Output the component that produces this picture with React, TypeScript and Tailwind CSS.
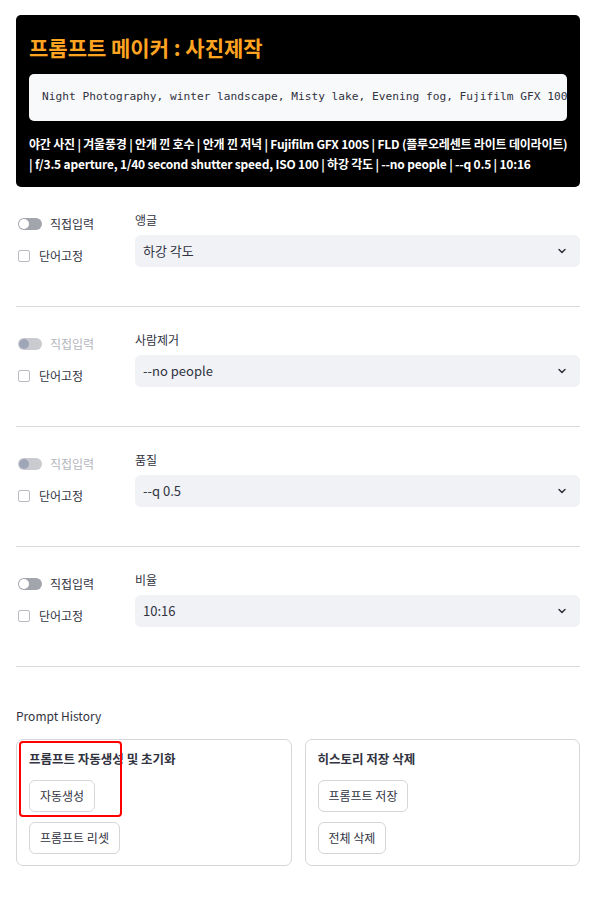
import { ChevronDown } from "lucide-react";

const font = { fontFamily: '"Noto Sans CJK KR", "Noto Sans", sans-serif' };

type Row = { label: string; value: string; disabled?: boolean };

const rows: Row[] = [
  { label: "앵글", value: "하강 각도" },
  { label: "사람제거", value: "--no people", disabled: true },
  { label: "품질", value: "--q 0.5", disabled: true },
  { label: "비율", value: "10:16" },
];

function Toggle({ disabled }: { disabled?: boolean }) {
  return (
    <div className="flex items-center gap-[8px] h-[18px]">
      <div
        className={`ml-[2px] w-[24px] h-[12px] rounded-full flex items-center px-[1px] ${
          disabled ? "bg-[#c9cbd1]" : "bg-[#a3a5ad]"
        }`}
      >
        <div
          className={`w-[10px] h-[10px] rounded-full ${
            disabled ? "bg-[#a0a6ba]" : "bg-white"
          }`}
        />
      </div>
      <span className={`text-[12px] ${disabled ? "text-[#b4b6bd]" : "text-[#31333f]"}`}>
        직접입력
      </span>
    </div>
  );
}

function Checkbox() {
  return (
    <div className="flex items-center gap-[9px] h-[18px]">
      <div className="ml-[2px] w-[12px] h-[12px] rounded-[2px] border border-[#b9bbc2] bg-white" />
      <span className="text-[12px] text-[#31333f]">단어고정</span>
    </div>
  );
}

function SelectRow({ row }: { row: Row }) {
  return (
    <div>
      <div className="flex pt-[24px] pb-[39px]">
        <div className="w-[119px] flex flex-col gap-[14px] pt-[4px]">
          <Toggle disabled={row.disabled} />
          <Checkbox />
        </div>
        <div className="flex-1 flex flex-col gap-[6px]">
          <div className="h-[18px] flex items-center text-[12px] text-[#31333f]">{row.label}</div>
          <div className="h-[32px] rounded-[6px] bg-[#f0f2f6] flex items-center justify-between pl-[8px] pr-[12px]">
            <span className="text-[13px] text-[#31333f]">{row.value}</span>
            <ChevronDown size={12} strokeWidth={3} className="text-[#31333f]" />
          </div>
        </div>
      </div>
      <div className="h-px bg-[#d9dadd]" />
    </div>
  );
}

function Btn({ children }: { children: string }) {
  return (
    <div className="self-start h-[32px] px-[10px] flex items-center rounded-[6px] border border-[#d6d6d9] bg-white text-[12px] text-[#31333f]">
      {children}
    </div>
  );
}

export default function App() {
  return (
    <div className="bg-white w-[608px] min-h-[903px] pl-[16px] pr-[28px] pt-[15px]" style={font}>
      <div className="bg-black rounded-[5px] px-[13px] pt-[18px] pb-[13px]">
        <h1 className="text-[21px] leading-[28px] font-bold text-[#ffa421]">
          프롬프트 메이커 : 사진제작
        </h1>
        <div className="mt-[13px] h-[47px] rounded-[5px] bg-[#f8f9fb] flex items-center px-[13px] overflow-hidden">
          <span
            className="whitespace-nowrap text-[11.2px] text-[#31333f]"
            style={{ fontFamily: '"DejaVu Sans Mono", "Liberation Mono", monospace' }}
          >
            Night Photography, winter landscape, Misty lake, Evening fog, Fujifilm GFX 100S, FLD
          </span>
        </div>
        <p className="mt-[13px] text-[12px] leading-[20px] font-semibold text-white whitespace-nowrap tracking-[-0.2px]">
          야간 사진 | 겨울풍경 | 안개 낀 호수 | 안개 낀 저녁 | Fujifilm GFX 100S | FLD (플루오레센트 라이트 데이라이트)
          <br />| f/3.5 aperture, 1/40 second shutter speed, ISO 100 | 하강 각도 | --no people | --q 0.5 | 10:16
        </p>
      </div>

      {rows.map((r) => (
        <SelectRow key={r.label} row={r} />
      ))}

      <div className="pt-[40px] text-[12px] leading-[18px] text-[#31333f]">Prompt History</div>

      <div className="mt-[14px] grid grid-cols-2 gap-[13px]">
        <div className="relative h-[127px] rounded-[7px] border border-[#d6d6d9] p-[12px] flex flex-col">
          <div className="text-[12.5px] leading-[14px] font-semibold text-[#31333f]">
            프롬프트 자동생성 및 초기화
          </div>
          <div className="mt-[14px] flex flex-col gap-[10px]">
            <Btn>자동생성</Btn>
            <Btn>프롬프트 리셋</Btn>
          </div>
          <div className="absolute left-[2px] top-[1px] w-[103px] h-[76px] rounded-[4px] border-2 border-[#ff0000]" />
        </div>
        <div className="h-[127px] rounded-[7px] border border-[#d6d6d9] p-[12px] flex flex-col">
          <div className="text-[12.5px] leading-[14px] font-semibold text-[#31333f]">
            히스토리 저장 삭제
          </div>
          <div className="mt-[14px] flex flex-col gap-[10px]">
            <Btn>프롬프트 저장</Btn>
            <Btn>전체 삭제</Btn>
          </div>
        </div>
      </div>
    </div>
  );
}
